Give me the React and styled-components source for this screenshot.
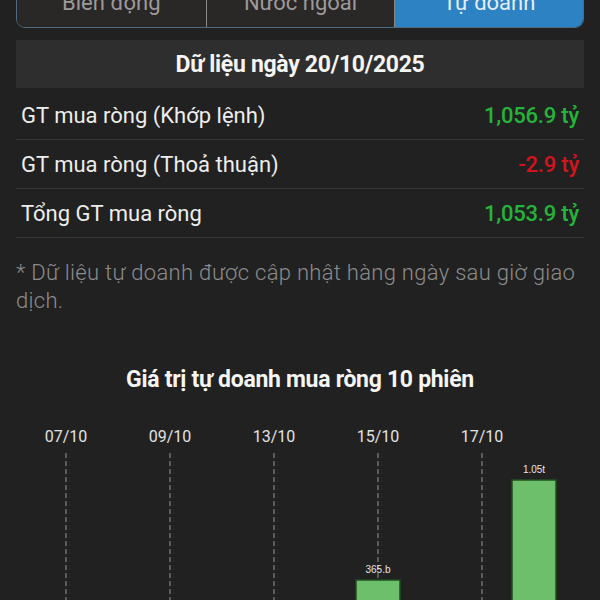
import React from 'react'
import styled, { createGlobalStyle } from 'styled-components'

const tabs = ['Biến động', 'Nước ngoài', 'Tự doanh']

const rows = [
  { label: 'GT mua ròng (Khớp lệnh)', value: '1,056.9 tỷ', up: true },
  { label: 'GT mua ròng (Thoả thuận)', value: '-2.9 tỷ', up: false },
  { label: 'Tổng GT mua ròng', value: '1,053.9 tỷ', up: true },
]

const sessions = [
  { day: '07/10', value: -120 },
  { day: '08/10', value: -60 },
  { day: '09/10', value: -310 },
  { day: '10/10', value: -85 },
  { day: '13/10', value: -210 },
  { day: '14/10', value: -150 },
  { day: '15/10', value: 365, text: '365.b' },
  { day: '16/10', value: -45 },
  { day: '17/10', value: -520 },
  { day: '20/10', value: 1053.9, text: '1.05t' },
]

const CHART_W = 568
const STEP = 52
const LEFT = 24
const BASE = 235
const SCALE = 0.1452
const BAR_W = 44

const Chart = () => (
  <ChartSvg width={CHART_W} height={260} viewBox={`0 0 ${CHART_W} 260`}>
    {sessions.map((s, i) => {
      const cx = LEFT + STEP * i + STEP / 2
      if (i % 2 !== 0) return null
      return (
        <g key={'axis' + s.day}>
          <text
            x={cx}
            y={44}
            textAnchor='middle'
            fill='#e2e2e2'
            fontSize={16}
            fontFamily='Roboto, sans-serif'
          >
            {s.day}
          </text>
          <line
            x1={cx}
            x2={cx}
            y1={55}
            y2={260}
            stroke='#7a7a7a'
            strokeWidth={1.3}
            strokeDasharray='5 3'
          />
        </g>
      )
    })}
    {sessions.map((s, i) => {
      if (s.value <= 0) return null
      const cx = LEFT + STEP * i + STEP / 2
      const h = s.value * SCALE
      return (
        <g key={'bar' + s.day}>
          <rect
            x={cx - BAR_W / 2}
            y={BASE - h}
            width={BAR_W}
            height={h}
            fill='#6dbf6c'
            stroke='#1f4d1f'
            strokeWidth={1.5}
          />
          <text
            x={cx}
            y={BASE - h - 7}
            textAnchor='middle'
            fill='#e6e6e6'
            fontSize={10}
            fontFamily='"Liberation Sans Narrow", "Liberation Sans", sans-serif'
          >
            {s.text}
          </text>
        </g>
      )
    })}
  </ChartSvg>
)

const App = () => {
  return (
    <>
      <GlobalStyle />
      <Page>
        <TabBar>
          {tabs.map((t, i) => (
            <Tab key={t} active={i === 2}>
              {t}
            </Tab>
          ))}
        </TabBar>
        <DateHeader>Dữ liệu ngày 20/10/2025</DateHeader>
        <List>
          {rows.map((r) => (
            <Row key={r.label}>
              <Label>{r.label}</Label>
              <Value up={r.up}>{r.value}</Value>
            </Row>
          ))}
        </List>
        <Note>
          * Dữ liệu tự doanh được cập nhật hàng ngày sau giờ giao dịch.
        </Note>
        <ChartTitle>Giá trị tự doanh mua ròng 10 phiên</ChartTitle>
        <Chart />
      </Page>
    </>
  )
}

const GlobalStyle = createGlobalStyle`
  html, body {
    margin: 0;
    background: #212121;
    overflow: hidden;
  }
  body {
    font-family: Roboto, "Noto Sans", sans-serif;
  }
`

const Page = styled.div`
  width: 568px;
  padding: 0 16px;
  height: 600px;
  overflow: hidden;
`

const TabBar = styled.div`
  display: grid;
  grid-template-columns: repeat(3, 1fr);
  margin-top: -24px;
  height: 52px;
  border: 1.5px solid #4b6c82;
  border-radius: 0 0 9px 9px;
  overflow: hidden;
  box-sizing: border-box;
`

const Tab = styled.div`
  display: flex;
  align-items: center;
  justify-content: center;
  font-size: 22px;
  color: ${(p) => (p.active ? '#e4eef7' : '#9d9a9a')};
  background: ${(p) => (p.active ? '#2d82c4' : '#2a2727')};
  & + & {
    border-left: 1px solid #8a8a8a;
  }
`

const DateHeader = styled.div`
  margin-top: 12px;
  height: 48px;
  display: flex;
  align-items: center;
  justify-content: center;
  background: #2e2e2e;
  color: #f5f5f5;
  font-size: 23px;
  font-weight: 700;
  letter-spacing: -0.3px;
`

const List = styled.div`
  margin-top: 3px;
`

const Row = styled.div`
  display: flex;
  align-items: center;
  justify-content: space-between;
  height: 48px;
  padding: 0 5px;
  border-bottom: 1px solid #363636;
`

const Label = styled.span`
  font-size: 22px;
  color: #ededed;
`

const Value = styled.span`
  font-size: 22px;
  font-weight: 500;
  letter-spacing: -0.2px;
  color: ${(p) => (p.up ? '#25b43a' : '#d3141c')};
`

const Note = styled.p`
  margin: 21px 0 0;
  font-size: 22px;
  font-weight: 300;
  letter-spacing: 0.3px;
  line-height: 28px;
  color: #8c8c8c;
`

const ChartTitle = styled.div`
  margin-top: 52px;
  line-height: 26px;
  text-align: center;
  font-size: 23px;
  font-weight: 700;
  letter-spacing: -0.3px;
  color: #f5f5f5;
`

const ChartSvg = styled.svg`
  display: block;
  margin-top: 5px;
`

export default App
